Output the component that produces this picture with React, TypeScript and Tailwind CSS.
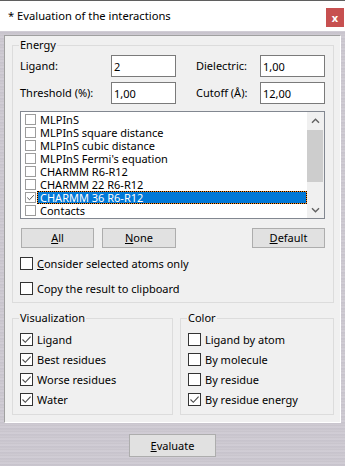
import type { ReactNode } from "react";

type Item = { label: string; checked?: boolean; selected?: boolean };

const methods: Item[] = [
  { label: "MLPInS" },
  { label: "MLPInS square distance" },
  { label: "MLPInS cubic distance" },
  { label: "MLPInS Fermi's equation" },
  { label: "CHARMM R6-R12" },
  { label: "CHARMM 22 R6-R12" },
  { label: "CHARMM 36 R6-R12", checked: true, selected: true },
  { label: "Contacts" },
];

const visualization: Item[] = [
  { label: "Ligand", checked: true },
  { label: "Best residues", checked: true },
  { label: "Worse residues", checked: true },
  { label: "Water", checked: true },
];

const colors: Item[] = [
  { label: "Ligand by atom" },
  { label: "By molecule" },
  { label: "By residue" },
  { label: "By residue energy", checked: true },
];

function Tick() {
  return (
    <svg width="11" height="11" viewBox="0 0 11 11" className="block">
      <path d="M1.5 5.5L4.3 8.3L9.6 2.6" fill="none" stroke="#4a4a4a" strokeWidth="1.1" />
    </svg>
  );
}

function Chevron({ down }: { down?: boolean }) {
  return (
    <svg width="9" height="6" viewBox="0 0 9 6" className="block">
      <path
        d={down ? "M1 1.2L4.5 4.7L8 1.2" : "M1 4.8L4.5 1.3L8 4.8"}
        fill="none"
        stroke="#606060"
        strokeWidth="1.4"
      />
    </svg>
  );
}

function CheckRow({ checked, children }: { checked?: boolean; children: ReactNode }) {
  return (
    <div className="flex h-[13px] items-center gap-[4px] leading-[13px]">
      <span className="flex h-[13px] w-[13px] shrink-0 items-center justify-center border border-[#333333] bg-white">
        {checked && <Tick />}
      </span>
      <span>{children}</span>
    </div>
  );
}

function Field({ value }: { value: string }) {
  return (
    <input
      readOnly
      value={value}
      className="h-[22px] w-[65px] border border-[#7a7a7a] bg-white px-[2px] text-[11px] outline-none"
    />
  );
}

function Btn({ children, className }: { children: ReactNode; className?: string }) {
  return (
    <button
      type="button"
      className={`h-[20px] border border-[#adadad] bg-[#e1e1e1] text-[11px] leading-[18px] ${className ?? ""}`}
    >
      {children}
    </button>
  );
}

function App() {
  return (
    <div className="h-[466px] w-[345px] overflow-hidden bg-[repeating-linear-gradient(180deg,#cac6ce_0px,#d5d1d9_1px,#c3bfc8_3px,#d0ccd4_4px,#c7c3cb_6px)] font-['Noto_Sans',sans-serif] text-[11px] text-black">
      {/* title bar */}
      <div className="flex h-[31px] items-start justify-between border-t border-[#5f5f5f] bg-white pl-[8px] pr-[1px]">
        <span className="mt-[6px] text-[11.2px] leading-[18px]">* Evaluation of the interactions</span>
        <div className="mt-[7px] flex h-[19px] w-[18px] items-center justify-center bg-[#c75050] text-[11px] font-bold leading-none text-white">
          x
        </div>
      </div>

      <div className="ml-[4px] mt-[4px] w-[337px] border border-t-[#a0a0a0] border-l-[#a0a0a0] border-r-white border-b-white bg-[#f0f0f0] pb-[7px] pl-[7px] pr-[6px] pt-[2px]">
        {/* Energy */}
        <fieldset className="border border-[#dcdcdc] pb-[7px] pl-[7px] pr-[8px] pt-[3px]">
          <legend className="-ml-[1px] px-[1px] leading-[14px]">Energy</legend>

          <div className="flex items-center">
            <span className="w-[91px]">Ligand:</span>
            <Field value="2" />
            <span className="ml-[20px] w-[64px]">Dielectric:</span>
            <Field value="1,00" />
          </div>
          <div className="mt-[5px] flex items-center">
            <span className="w-[91px]">Threshold (%):</span>
            <Field value="1,00" />
            <span className="ml-[20px] w-[64px]">Cutoff (Å):</span>
            <Field value="12,00" />
          </div>

          {/* method list */}
          <div className="mt-[7px] flex h-[108px] border border-[#828790] bg-white">
            <div className="flex-1 pt-[1px]">
              {methods.map((m) => (
                <div key={m.label} className="flex h-[13px] items-center pl-[4px]">
                  <span className="flex h-[11px] w-[11px] shrink-0 items-center justify-center border border-[#9c9c9c] bg-white">
                    {m.checked && <Tick />}
                  </span>
                  {m.selected ? (
                    <div className="ml-[1px] h-[13px] flex-1 bg-[#ff8c1a]">
                      <div className="h-[13px] border border-dotted border-black bg-[#0078d7] bg-clip-padding pl-[2px] leading-[11px] text-white">
                        {m.label}
                      </div>
                    </div>
                  ) : (
                    <div className="ml-[1px] h-[13px] flex-1 border border-transparent pl-[2px] leading-[11px]">
                      {m.label}
                    </div>
                  )}
                </div>
              ))}
            </div>
            <div className="flex w-[17px] flex-col bg-[#f0f0f0]">
              <div className="flex h-[17px] items-center justify-center">
                <Chevron />
              </div>
              <div className="mt-[1px] h-[52px] w-[16px] bg-[#cdcdcd]" />
              <div className="flex-1" />
              <div className="flex h-[17px] items-center justify-center">
                <Chevron down />
              </div>
            </div>
          </div>

          <div className="mt-[9px] flex">
            <Btn className="ml-[1px] w-[73px]">
              <u>A</u>ll
            </Btn>
            <Btn className="ml-[8px] w-[74px]">
              <u>N</u>one
            </Btn>
            <Btn className="ml-auto w-[73px]">
              <u>D</u>efault
            </Btn>
          </div>

          <div className="mt-[9px]">
            <CheckRow>
              <u>C</u>onsider selected atoms only
            </CheckRow>
          </div>
          <div className="mt-[12px]">
            <CheckRow>Copy the result to clipboard</CheckRow>
          </div>
        </fieldset>

        {/* Visualization / Color */}
        <div className="mt-[8px] flex gap-[7px]">
          <fieldset className="w-[161px] border border-[#dcdcdc] pb-[8px] pl-[7px] pt-[8px]">
            <legend className="-ml-[1px] px-[1px] leading-[14px]">Visualization</legend>
            <div className="flex flex-col gap-[7px]">
              {visualization.map((v) => (
                <CheckRow key={v.label} checked={v.checked}>
                  {v.label}
                </CheckRow>
              ))}
            </div>
          </fieldset>
          <fieldset className="w-[154px] border border-[#dcdcdc] pb-[8px] pl-[7px] pt-[8px]">
            <legend className="-ml-[1px] px-[1px] leading-[14px]">Color</legend>
            <div className="flex flex-col gap-[7px]">
              {colors.map((c) => (
                <CheckRow key={c.label} checked={c.checked}>
                  {c.label}
                </CheckRow>
              ))}
            </div>
          </fieldset>
        </div>
      </div>

      <div className="mt-[11px] flex justify-center">
        <button
          type="button"
          className="h-[23px] w-[87px] border border-[#adadad] bg-[#e1e1e1] text-[11px] leading-[21px]"
        >
          <u>E</u>valuate
        </button>
      </div>
    </div>
  );
}

export default App;
